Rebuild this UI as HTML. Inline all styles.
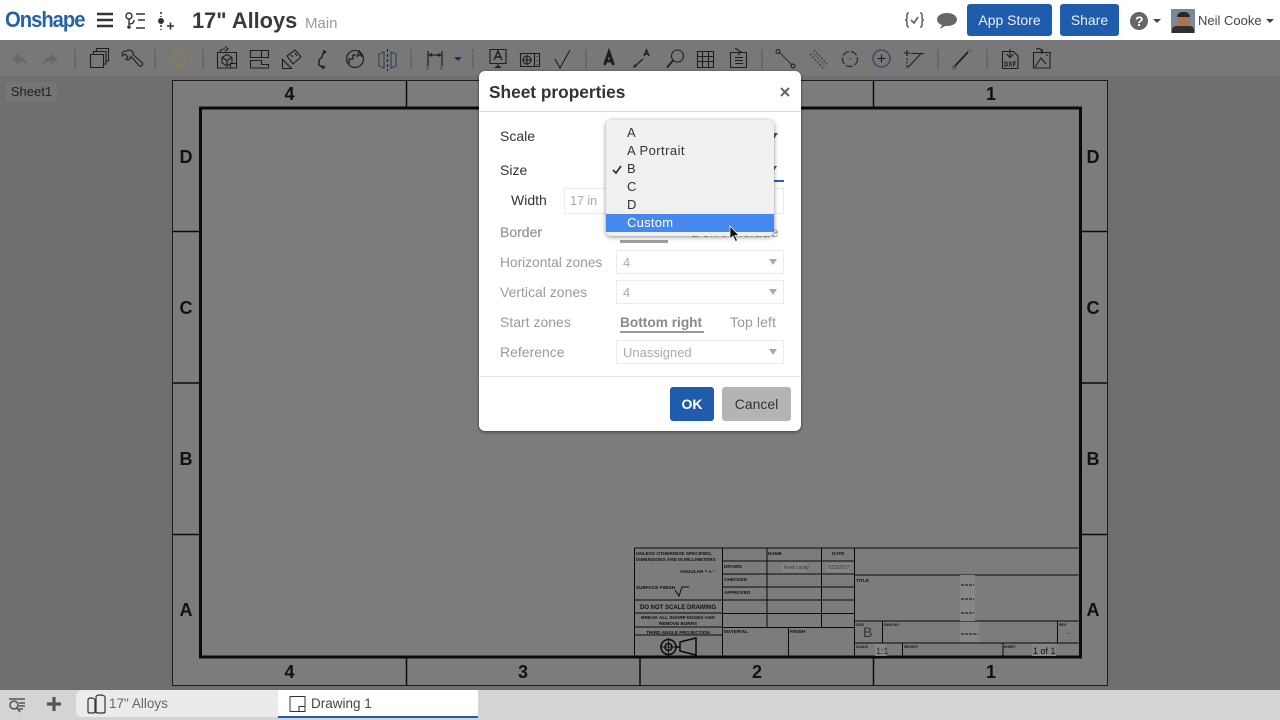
<!DOCTYPE html>
<html><head><meta charset="utf-8"><style>
html,body{margin:0;padding:0}
body{width:1280px;height:720px;overflow:hidden;position:relative;background:#6f6f6f;font-family:"Liberation Sans",sans-serif;color:#333}
.a{position:absolute;white-space:nowrap}
svg{position:absolute;overflow:visible}
.btn{position:absolute;background:#1f5cab;color:#eef;border-radius:3px;font-size:14px;text-align:center;top:4px;height:32px;line-height:32px}
.lab{position:absolute;font-size:14px;line-height:16px;white-space:nowrap}
.dis{color:#9a9a9a}
.sel{position:absolute;left:616px;width:166px;height:22px;border:1px solid #ececec;font-size:13px;color:#aaa;line-height:24px;text-indent:6px;background:#fff}
.sel:after{content:"";position:absolute;right:6px;top:8px;border:4px solid transparent;border-top:6px solid #aaa;border-bottom:0}
.mi{position:absolute;left:606px;width:168px;height:18px;line-height:18px;font-size:13px;text-indent:21px;color:#333;letter-spacing:.25px}
</style></head><body>
<!-- top bar -->
<div class="a" style="left:0;top:0;width:1280px;height:40px;background:#fff"></div>
<div class="a" style="left:5px;top:7px;font-size:22px;font-weight:700;color:#2563a8;letter-spacing:-1.1px;line-height:26px;transform:scaleX(.92);transform-origin:0 0">Onshape</div>
<svg style="left:0;top:0" width="1280" height="40" fill="none" stroke="#333">
<path d="M97 14h16M97 20h16M97 26h16" stroke-width="2.6"/>
<circle cx="129" cy="16" r="3" stroke-width="1.4"/><path d="M129 19v6M129 24c3 0 5-1 5-4" stroke-width="1.4"/><circle cx="129" cy="27" r="1.8" fill="#333" stroke="none"/><path d="M136 14h9M138 20h7M136 28h9" stroke-width="1.4"/>
<path d="M161 12v2M161 16v1M161 25v2M161 29v1" stroke-width="1.6"/><circle cx="161" cy="21" r="3" fill="#333" stroke="none"/><path d="M167 26h7M170.500 22.500v7" stroke-width="1.6"/>
<path d="M909 13c-3 0-2 3-2 5s-2 2-2 2 2 0 2 2-1 5 2 5M920 13c3 0 2 3 2 5s2 2 2 2-2 0-2 2 1 5-2 5" stroke="#666" stroke-width="1.6"/><path d="M911 20l3 3 4-6" stroke="#666" stroke-width="1.8"/>
<path d="M947 13c6 0 10 3 10 6.500s-4 6.500-10 6.500c-1 0-2 0-2 0l-5 3 2-4c-3-1-5-3-5-5.500 0-3.500 4-6.500 10-6.500z" fill="#666" stroke="none"/>
<circle cx="1139" cy="21" r="9" fill="#666" stroke="none"/>
<path d="M1153 19h8l-4 4zM1266 19h8l-4 4z" fill="#444" stroke="none"/>
</svg>
<div class="a" style="left:1135px;top:13px;color:#fff;font-weight:700;font-size:14px;line-height:16px">?</div>
<div class="a" style="left:192px;top:8px;font-size:21.800px;font-weight:700;color:#3a3a3a;line-height:26px">17" Alloys</div>
<div class="a" style="left:305px;top:15px;font-size:15px;color:#999;line-height:18px">Main</div>
<div class="btn" style="left:967px;width:85px">App Store</div>
<div class="btn" style="left:1060px;width:59px">Share</div>
<div class="a" style="left:1171px;top:9px;width:24px;height:24px;background:#7a8a9c;overflow:hidden"><div class="a" style="left:6px;top:4px;width:13px;height:14px;border-radius:6px;background:#a87550"></div><div class="a" style="left:6px;top:3px;width:13px;height:5px;border-radius:5px 5px 0 0;background:#2c2620"></div><div class="a" style="left:1px;top:17px;width:22px;height:7px;border-radius:4px 4px 0 0;background:#33302c"></div></div>
<div class="a" style="left:1198px;top:13px;font-size:13px;color:#444;line-height:16px">Neil Cooke</div>
<!-- toolbar -->
<div class="a" style="left:0;top:40px;width:1280px;height:36px;background:#787878"></div>
<svg style="left:0;top:40px" width="1280" height="37" fill="none" stroke="#1e1e1e" stroke-width="1.100">
<path d="M75 9v20M155 9v20M203 9v20M411 9v20M473 9v20M586 9v20M762 9v20M938 9v20M987 9v20" stroke="#686868" stroke-width="2"/>
<path d="M13 19l6-6v4c4 0 7 2 8 8-2-3-4-4-8-4v4z" fill="#666" stroke="none"/><path d="M57 19l-6-6v4c-4 0-7 2-8 8 2-3 4-4 8-4v4z" fill="#666" stroke="none"/>
<path d="M90.500 14.500h13v13h-13zM93.500 14v-2.500h12.500v12.500h-2.500M96.500 11v-2.500h12v12.500h-2.500"/>
<path d="M126 11c-3 0-4 2-4 4l.5 1 2.500-2 3 3-2 2.500c3 1 5-1 5-3l8 9c1 1 2 1 3 0s1-2 0-3l-9-8c.5-2-1-4.500-4-4.500z"/>
<circle cx="178.500" cy="19" r="7" stroke="#857a5c" stroke-width="3"/>
<path d="M217.500 12.500h19v15.500h-19zM230.500 28v-4.500h6M220 12c0-2 2-3 5-3M225 6.500l3 2.500-3 2.500" /><path d="M227 14.500l5 3v5.500l-5 3-5-3v-5.500zM222 17.500l5 3 5-3M227 20.500v5.500"/>
<path d="M250.500 10.500h18v7h-18zM261.500 10.500v7M250.500 20.500h11v4h7v3.500h-18z"/>
<path d="M282.500 28.500v-9l9 9zM287 16l8-6 6 7-8 7zM291 15l2 2M295 13l2 3"/>
<path d="M323 13l-1 4-3 3v5l3 2" stroke-width="1.400"/><path d="M323 9.500l4 2.500-4 2.500zM322 25l4 2-4 2.500z" fill="#222" stroke="none"/>
<circle cx="355" cy="19" r="8.500" stroke="#2a2a2a" stroke-width="1.300"/><path d="M349 24v-5h4v-4h3" stroke-width="1.300"/><path d="M357 17l2.500-6 2.500 6M358 15h3" stroke-width="1.200"/>
<path d="M379 14l5-2v16l-5-2zM396 14l-5-2v16l5-2z" stroke="#33465e" stroke-width="1.200"/><path d="M387.500 9v22" stroke-dasharray="3 2"/>
<path d="M428 11v15M442 11v15M428 15h14" stroke-width="1.200"/><path d="M428 15l4-2v4zM442 15l-4-2v4z" fill="#222" stroke="none"/>
<text x="426" y="30" font-size="5" fill="#2a2a66" stroke="none">0</text><text x="440" y="30" font-size="5" fill="#2a2a66" stroke="none">0</text>
<path d="M454 17h8l-4 4z" fill="#2a2a70" stroke="none"/>
<path d="M490 9.500h16v14h-16zM498 23.500v2" /><path d="M494 28l4-3 4 3z" fill="#222" stroke="none"/><path d="M494 20l4-9 4 9M495 17h6" stroke-width="1.400"/>
<path d="M520.500 13.500h19v13h-19zM534.500 13.500v13"/><circle cx="527" cy="20" r="4"/><path d="M522 20h10M527 15v10M537 16v1M537 20v1M537 24v1"/>
<path d="M555 19l5 9 10-18"/>
<path d="M604.500 25l4.500-13 4.500 13M606 21h6.500" stroke-width="2.800"/>
<path d="M634 27l9-8" stroke-width="1.200"/><path d="M633 28l1.500-4 2.500 2.500z" fill="#222" stroke="none"/><path d="M644 16l2.500-6 2.500 6M645 14h3" stroke-width="1.400"/>
<circle cx="677.500" cy="16" r="6"/><path d="M673 20.500l-6 7" stroke-width="1.800"/>
<path d="M697.500 11.500h16v16h-16zM697.500 16.500h16M697.500 21.500h16M702.500 11.500v16M708.500 11.500v16"/>
<path d="M730.500 12.500h16v15h-16zM735 8l6 4-3 3M735 17.500h8M735 20.500h8M735 23.500h8"/>
<path d="M779 12l13 13" stroke="#333"/><circle cx="778" cy="11.500" r="2"/><circle cx="793" cy="26" r="2"/>
<path d="M814 10l13 14" stroke="#333" stroke-dasharray="2 1.500"/><path d="M812 12l13 14" stroke="#5c6670" stroke-width="1.600"/><path d="M810 14l13 14" stroke="#333" stroke-dasharray="2 1.500"/>
<circle cx="850" cy="19" r="7.500" stroke="#333" stroke-width="1.400" stroke-dasharray="7 2"/><circle cx="850" cy="19" r=".8" fill="#444" stroke="none"/>
<circle cx="881.500" cy="18.500" r="8.500" stroke="#3c4c66" stroke-width="1.500"/><path d="M877.500 18.500h8M881.500 14.500v8"/>
<path d="M904 13h6M907 10v6M911 13.500h13M921 13.500l-13 14" stroke-width="1.100"/><path d="M907 18v11" stroke-dasharray="2 1.500"/>
<path d="M954 27l14-15" stroke-width="1.800"/><path d="M953 26h3v3h-3zM967 10h4v2" stroke="#555"/>
<path d="M1002.500 11.500h11l4.500 4.500v12.500h-15.500zM1010 9v8M1006.500 14l3.500 3.500 3.500-3.500" /><text x="1004" y="26.500" font-size="7" font-weight="700" fill="#1e1e1e" stroke="none" font-family="Liberation Mono,monospace">DXF</text>
<path d="M1033.500 12.500h16.500v15.500h-16.500zM1035 27l6-9 5 6M1036 9c3-1 5 0 6 3M1042 9l.5 4-3.500-.5M1046 15h2"/>
</svg>
<!-- sheet tab -->
<div class="a" style="left:6px;top:82px;width:51px;height:20px;background:#757575;text-align:center;font-size:13px;line-height:20px;color:#222">Sheet1</div>
<!-- drawing -->
<div class="a" style="left:172px;top:80px;width:934px;height:604px;border:1px solid #1c1c1c;background:#7c7c7c"></div>
<svg style="left:0;top:0" width="1280" height="720" fill="none" stroke="#0a0a0a" stroke-width="1.200" font-family="Liberation Sans,sans-serif">
<rect x="200.500" y="108" width="880" height="549" stroke-width="3"/>
<path d="M406.500 81v26M640 81v26M873.500 81v26M406.500 658v27M640 658v27M873.500 658v27M173 231.500h27M173 383h27M173 534.500h27M1081 231.500h26M1081 383h26M1081 534.500h26" stroke-width="1.500"/>
<g fill="#111" stroke="none" font-size="18" font-weight="700" text-anchor="middle">
<text x="289.500" y="100">4</text><text x="991" y="100">1</text>
<text x="289.500" y="678">4</text><text x="523" y="678">3</text><text x="757" y="678">2</text><text x="991" y="678">1</text>
<text x="186" y="163">D</text><text x="186" y="314">C</text><text x="186" y="465">B</text><text x="186" y="616">A</text>
<text x="1093" y="163">D</text><text x="1093" y="314">C</text><text x="1093" y="465">B</text><text x="1093" y="616">A</text></g>
<!-- title block -->
<path d="M634.500 548h444M634.500 548v109M722.500 548v109M767 548v80M821.500 548v80M854.500 548v109M634.500 600h88M634.500 613h88M634.500 627h88M634.500 635h88M722.500 561h132M722.500 574h132M722.500 587h132M722.500 600h132M722.500 613.500h132M722.500 627.500h132M788.500 628v29M854.500 575h224M854.500 621h224M854.500 643h224M882.500 621v22M902.500 643v14M1003 643v14M1057.500 621v22" stroke-width="1"/>
<g fill="#111" stroke="none" font-size="4.700" font-weight="700">
<text x="636" y="555">UNLESS OTHERWISE SPECIFIED,</text><text x="636" y="561">DIMENSIONS ARE IN MILLIMETERS</text>
<text x="680" y="573">ANGULAR = ± °</text><text x="636" y="589">SURFACE FINISH</text>
<text x="678" y="609" font-size="6" text-anchor="middle">DO NOT SCALE DRAWING</text>
<text x="678" y="619" text-anchor="middle">BREAK ALL SHARP EDGES AND</text><text x="678" y="625" text-anchor="middle">REMOVE BURRS</text>
<text x="678" y="634" text-anchor="middle">THIRD ANGLE PROJECTION</text>
<text x="724" y="568">DRAWN</text><text x="724" y="581">CHECKED</text><text x="724" y="594">APPROVED</text>
<text x="768" y="555">NAME</text><text x="832" y="555">DATE</text><text x="724" y="633">MATERIAL</text><text x="790" y="633">FINISH</text>
<text x="856" y="582">TITLE</text><text x="856" y="626" font-size="3.500">SIZE</text><text x="884" y="626" font-size="3.500">DWG NO.</text><text x="1059" y="626" font-size="3.500">REV</text><text x="856" y="648" font-size="3.500">SCALE</text><text x="904" y="648" font-size="3.500">WEIGHT</text><text x="1004" y="648" font-size="3.500">SHEET</text>
</g>
<path d="M675 590l4 6 3-9h7" stroke-width="1"/>
<circle cx="668.500" cy="647" r="7.500" stroke-width="1.500"/><circle cx="668.500" cy="647" r="3.500" stroke-width="1.500"/><path d="M660 647h17M668.500 638v18" stroke-width=".8"/>
<path d="M680 642l16-4v17l-16-4zM680 647h-5" stroke-width="1.500"/>
<rect x="960" y="575" width="15" height="46" fill="#868686" stroke="none"/><rect x="960" y="622" width="19" height="20" fill="#868686" stroke="none"/>
<rect x="875" y="644" width="12" height="12" fill="#868686" stroke="none"/><rect x="1032" y="644" width="24" height="12" fill="#868686" stroke="none"/><rect x="782" y="563" width="24" height="9" fill="#858585" stroke="none"/><rect x="826" y="563" width="24" height="9" fill="#858585" stroke="none"/>
<path d="M961 585h13M961 599h13M961 613h13M961 634h17" stroke-dasharray="3 1" stroke-width="1"/>
<g fill="#333" stroke="none" font-size="14"><text x="863" y="637">B</text><text x="876" y="654" font-size="9">1:1</text><text x="1033" y="654" font-size="9" fill="#111">1 of 1</text><text x="1067" y="636" font-size="9">-</text><text x="784" y="569" font-size="5">Fred Lucky</text><text x="827" y="569" font-size="5">7/23/2017</text></g>
</svg>
<!-- bottom bar -->
<div class="a" style="left:0;top:690px;width:1280px;height:30px;background:#d4d4d4"></div>
<div class="a" style="left:76px;top:690px;width:202px;height:27px;background:#ebebeb;border-radius:6px 0 0 6px"></div>
<div class="a" style="left:278px;top:690px;width:200px;height:26px;background:#fff;border-bottom:2px solid #1f5cab"></div>
<svg style="left:0;top:690px" width="500" height="30" fill="none" stroke="#555">
<path d="M9 9h16M19 13h6M19 16h6M19 19h4" stroke-width="1.400"/><circle cx="14" cy="15" r="4" stroke-width="1.600"/><path d="M17 18l3 4" stroke-width="1.500"/>
<path d="M47 14h14M54 7v14" stroke-width="3.200"/>
<path d="M88 10c0-1 1-2 3-2s4 1 4 2v12c0 1-1 1-3.500 1s-3.500 0-3.500-1zM96 7c0-1 1-2 4-2s5 1 5 2v15c0 1-1 1-4.500 1s-4.500 0-4.500-1z" stroke="#333" stroke-width="1.200" stroke-linejoin="round"/>
<path d="M290 6.500h15v15h-15zM299 21.500v-5h6" stroke="#333" stroke-width="1"/>
</svg>
<div class="a" style="left:109px;top:696px;font-size:13.500px;color:#666;line-height:16px">17" Alloys</div>
<div class="a" style="left:311px;top:696px;font-size:13.500px;color:#444;line-height:16px">Drawing 1</div>
<!-- dialog -->
<div class="a" style="left:479px;top:71px;width:322px;height:360px;background:#fff;border-radius:6px;box-shadow:0 1px 3px rgba(0,0,0,.5)"></div>
<div class="a" style="left:479px;top:111px;width:322px;height:1px;background:#ddd"></div>
<div class="a" style="left:479px;top:376px;width:322px;height:1px;background:#e4e4e4"></div>
<div class="a" style="left:489px;top:82px;font-size:17.300px;font-weight:700;color:#333;line-height:21px">Sheet properties</div>
<svg style="left:780px;top:87px" width="10" height="10"><path d="M1 1l8 8M9 1l-8 8" stroke="#666" stroke-width="2"/></svg>
<div class="lab" style="left:500px;top:128px">Scale</div>
<div class="lab" style="left:500px;top:162px">Size</div>
<div class="lab" style="left:511px;top:192px">Width</div>
<div class="lab dis" style="left:500px;top:224px;color:#959595;-webkit-text-stroke:.2px #959595">Border</div>
<div class="lab dis" style="left:500px;top:255px;font-size:13.800px;letter-spacing:-.03px">Horizontal zones</div>
<div class="lab dis" style="left:500px;top:284px">Vertical zones</div>
<div class="lab dis" style="left:500px;top:314px">Start zones</div>
<div class="lab dis" style="left:500px;top:344px">Reference</div>
<div class="sel" style="top:250px">4</div>
<div class="sel" style="top:280px">4</div>
<div class="sel" style="top:340px">Unassigned</div>
<div class="a" style="left:564px;top:188px;width:218px;height:24px;border:1px solid #ececec;font-size:12.500px;color:#aaa;line-height:24px;text-indent:5px;background:#fff">17 in</div>
<div class="a" style="left:617px;top:180px;width:167px;height:2px;background:#2a5fae"></div>
<div class="a" style="left:769px;top:166px;border:4px solid transparent;border-top:6px solid #555;border-bottom:0"></div>
<div class="a" style="left:770px;top:133px;border:4px solid transparent;border-top:6px solid #555;border-bottom:0"></div>
<div class="lab" style="left:620px;top:224px;font-weight:700;color:#8a8a8a;font-size:13.500px">Include</div>
<div class="a" style="left:620px;top:240px;width:48px;height:3px;background:#a0a0a0"></div>
<div class="lab dis" style="left:691px;top:224px;font-size:14px;letter-spacing:.6px">Don't include</div>
<div class="lab" style="left:620px;top:315px;font-weight:700;color:#8a8a8a;font-size:13.700px">Bottom right</div>
<div class="a" style="left:620px;top:331px;width:84px;height:2px;background:#9a9a9a"></div>
<div class="lab dis" style="left:730px;top:314px;font-size:14px;letter-spacing:.1px">Top left</div>
<div class="a" style="left:670px;top:387px;width:44px;height:34px;background:#1f5cab;border-radius:3px;color:#fff;font-weight:700;font-size:14px;text-align:center;line-height:34px">OK</div>
<div class="a" style="left:722px;top:387px;width:69px;height:34px;background:#b4b4b4;border-radius:3px;color:#333;font-size:14px;text-align:center;line-height:34px">Cancel</div>
<!-- dropdown -->
<div class="a" style="left:606px;top:120px;width:168px;height:116px;background:#f0f0f0;border-radius:5px;box-shadow:0 1px 5px rgba(0,0,0,.45)"></div>
<div class="mi" style="top:124px">A</div>
<div class="mi" style="top:142px;letter-spacing:.45px">A Portrait</div>
<div class="mi" style="top:160px">B</div>
<div class="mi" style="top:178px">C</div>
<div class="mi" style="top:196px">D</div>
<div class="mi" style="top:214px;background:#4688ee;color:#fff;height:18px">Custom</div>
<svg style="left:612px;top:165px" width="10" height="10"><path d="M1 5l3 3 5-7" fill="none" stroke="#333" stroke-width="1.800"/></svg>
<svg style="left:729px;top:225px" width="12" height="18"><path d="M1 1v13l3-3 2.500 5.500 2-1-2.500-5h4z" fill="#111" stroke="#fff" stroke-width=".7"/></svg>
</body></html>
